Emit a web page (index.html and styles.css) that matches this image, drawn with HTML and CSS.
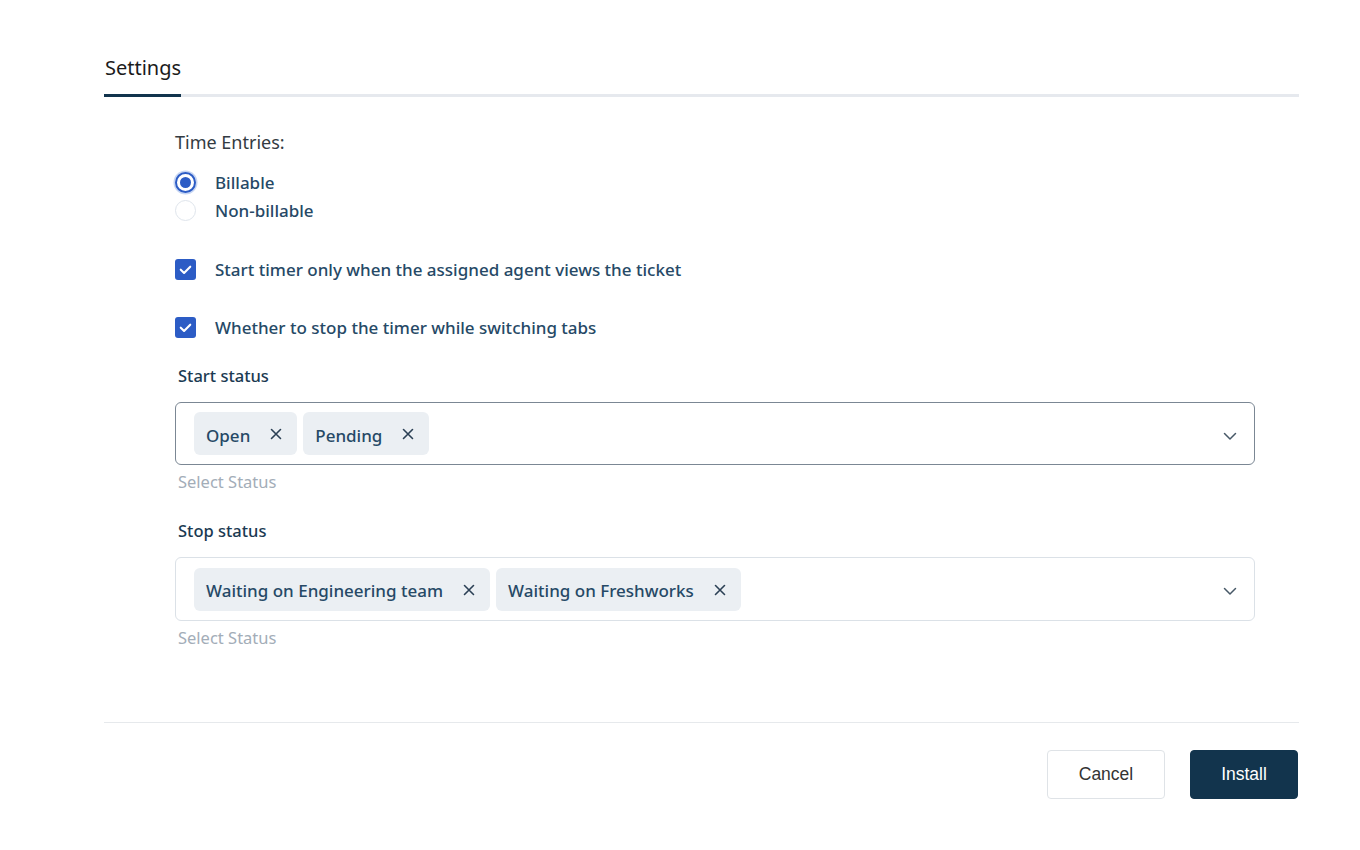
FILE: index.html
```html
<!DOCTYPE html>
<html>
<head>
<meta charset="utf-8">
<link rel="stylesheet" href="styles.css">
</head>
<body>
<div class="page">
  <div class="tabs">
    <div class="tab active">Settings</div>
  </div>
  <div class="form">
    <div class="group-title">Time Entries:</div>
    <div class="radios">
      <label class="radio-row"><span class="radio checked"></span><span class="opt">Billable</span></label>
      <label class="radio-row"><span class="radio"></span><span class="opt">Non-billable</span></label>
    </div>
    <label class="check-row first"><span class="checkbox"><svg viewBox="0 0 20 20" width="20" height="20"><path d="M5 10.2 L8.5 13.6 L15 7" fill="none" stroke="#fff" stroke-width="2.2" stroke-linecap="round" stroke-linejoin="round"/></svg></span><span class="opt">Start timer only when the assigned agent views the ticket</span></label>
    <label class="check-row"><span class="checkbox"><svg viewBox="0 0 20 20" width="20" height="20"><path d="M5 10.2 L8.5 13.6 L15 7" fill="none" stroke="#fff" stroke-width="2.2" stroke-linecap="round" stroke-linejoin="round"/></svg></span><span class="opt">Whether to stop the timer while switching tabs</span></label>

    <div class="field">
      <div class="field-label">Start status</div>
      <div class="select focused">
        <div class="tags">
          <span class="tag">Open<svg class="x" viewBox="0 0 12 12" width="12" height="12"><path d="M1.5 1.5 L10.5 10.5 M10.5 1.5 L1.5 10.5" stroke="#2b4055" stroke-width="1.6" stroke-linecap="round"/></svg></span>
          <span class="tag">Pending<svg class="x" viewBox="0 0 12 12" width="12" height="12"><path d="M1.5 1.5 L10.5 10.5 M10.5 1.5 L1.5 10.5" stroke="#2b4055" stroke-width="1.6" stroke-linecap="round"/></svg></span>
        </div>
        <svg class="chev" viewBox="0 0 16 16" width="16" height="16"><path d="M2.5 5.5 L8 11 L13.5 5.5" fill="none" stroke="#475867" stroke-width="1.5" stroke-linecap="round" stroke-linejoin="round"/></svg>
      </div>
      <div class="hint">Select Status</div>
    </div>

    <div class="field second">
      <div class="field-label">Stop status</div>
      <div class="select">
        <div class="tags">
          <span class="tag">Waiting on Engineering team<svg class="x" viewBox="0 0 12 12" width="12" height="12"><path d="M1.5 1.5 L10.5 10.5 M10.5 1.5 L1.5 10.5" stroke="#2b4055" stroke-width="1.6" stroke-linecap="round"/></svg></span>
          <span class="tag">Waiting on Freshworks<svg class="x" viewBox="0 0 12 12" width="12" height="12"><path d="M1.5 1.5 L10.5 10.5 M10.5 1.5 L1.5 10.5" stroke="#2b4055" stroke-width="1.6" stroke-linecap="round"/></svg></span>
        </div>
        <svg class="chev" viewBox="0 0 16 16" width="16" height="16"><path d="M2.5 5.5 L8 11 L13.5 5.5" fill="none" stroke="#475867" stroke-width="1.5" stroke-linecap="round" stroke-linejoin="round"/></svg>
      </div>
      <div class="hint">Select Status</div>
    </div>
  </div>
  <div class="footer">
    <button class="btn cancel">Cancel</button>
    <button class="btn install">Install</button>
  </div>
</div>
</body>
</html>
```

FILE: styles.css
```css
* { box-sizing: border-box; }
html, body { margin: 0; padding: 0; background: #fff; }
body {
  font-family: "Noto Sans", "Open Sans", sans-serif;
  color: #12344d;
}
.page {
  width: 1195px;
  margin-left: 104px;
  padding-top: 54px;
}
.tabs {
  display: flex;
  border-bottom: 3px solid #e6e9ee;
}
.tab {
  font-size: 20px;
  color: #1b1b1b;
  padding: 0 1px 12px 1px;
  margin-bottom: -3px;
  border-bottom: 3px solid #12344d;
  width: 77px;
  line-height: 28px;
}
.form {
  padding-left: 71px;
  padding-right: 44px;
}
.group-title {
  margin-top: 32px;
  font-size: 18px;
  color: #333b42;
  line-height: 26px;
}
.radios {
  margin-top: 13px;
  display: flex;
  flex-direction: column;
}
.radio-row, .check-row {
  display: flex;
  align-items: center;
  height: 28px;
}
.radio {
  width: 21px;
  height: 21px;
  border-radius: 50%;
  border: 1.5px solid #dfe5ec;
  background: #fff;
  margin-right: 19px;
  position: relative;
  flex: none;
}
.radio.checked {
  border: 2px solid #2c5cc5;
  box-shadow: 0 0 0 1.5px #c7d6f3;
}
.radio.checked::after {
  content: "";
  position: absolute;
  left: 3px;
  top: 3px;
  width: 11px;
  height: 11px;
  border-radius: 50%;
  background: #2c5cc5;
}
.opt {
  font-size: 17px;
  font-weight: 500;
  color: #264966;
}
.check-row { margin-top: 30px; }
.check-row.first { margin-top: 31px; }
.checkbox {
  width: 21px;
  height: 21px;
  border-radius: 3px;
  background: #2c5cc5;
  margin-right: 19px;
  display: flex;
  align-items: center;
  justify-content: center;
  flex: none;
}
.checkbox svg { width: 19px; height: 19px; }
.field { margin-top: 23px; }
.field.second { margin-top: 25px; }
.field-label {
  font-size: 16.5px;
  font-weight: 500;
  color: #1b3a52;
  padding-left: 3px;
  line-height: 24px;
}
.select {
  margin-top: 14px;
  height: 64px;
  border: 1px solid #dbe1e7;
  border-radius: 6px;
  display: flex;
  align-items: center;
  padding: 0 16px 0 18px;
}
.select.focused {
  border: 1.5px solid #7b8794;
  height: 63px;
}
.tags {
  display: flex;
  gap: 6px;
  flex: 1;
}
.tag {
  display: inline-flex;
  align-items: center;
  height: 43px;
  background: #ebeff3;
  border-radius: 6px;
  padding: 3px 15px 0 12px;
  font-size: 17px;
  font-weight: 500;
  color: #264966;
}
.tag .x {
  margin-left: 20px;
  margin-bottom: 2px;
  flex: none;
}
.chev { flex: none; margin-top: 4px; }
.hint {
  margin-top: 5px;
  padding-left: 3px;
  font-size: 16.5px;
  color: #a3adb8;
  line-height: 24px;
}
.footer {
  margin-top: 72px;
  border-top: 1px solid #e6e9ec;
  padding-top: 27px;
  display: flex;
  justify-content: flex-end;
  gap: 25px;
  padding-right: 1px;
}
.btn {
  font-family: "Liberation Sans", Arial, sans-serif;
  font-size: 17.5px;
  height: 49px;
  border-radius: 4px;
  cursor: pointer;
}
.btn.cancel {
  width: 118px;
  background: #fff;
  border: 1px solid #dfe3e7;
  color: #333;
}
.btn.install {
  width: 108px;
  background: #12344d;
  border: 1px solid #12344d;
  color: #fff;
}
```
